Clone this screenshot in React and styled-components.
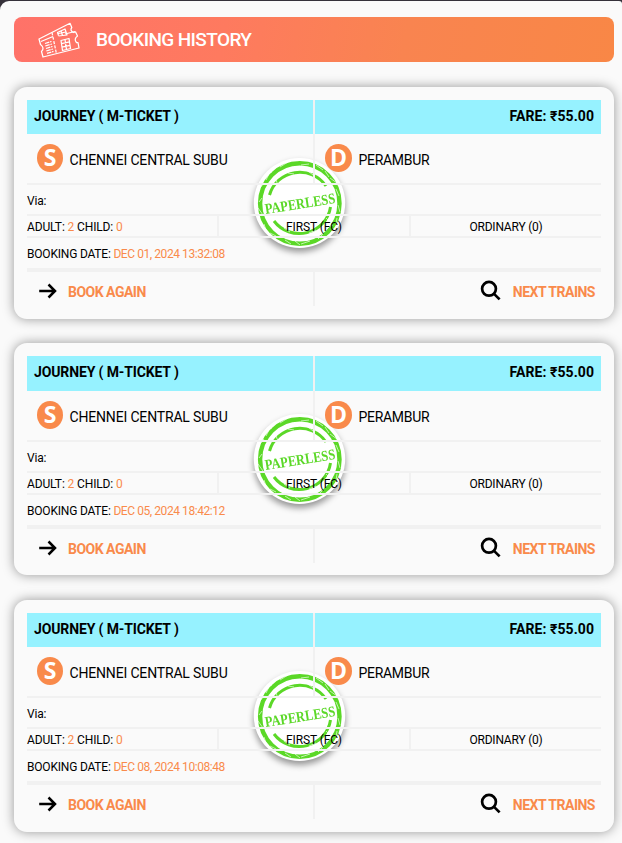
import React from "react";
import styled, { createGlobalStyle } from "styled-components";

const GlobalStyle = createGlobalStyle`
  * { box-sizing: border-box; }
  html { background: #35313a; overflow: hidden; }
  body { margin: 0; background: #35313a; font-family: Roboto, "Liberation Sans", sans-serif; color: #000; }
`;

const Page = styled.main`
  margin-top: 1px;
  height: 842px;
  overflow: hidden;
  padding: 16px 8px 0 14px;
  background: #fafafa;
  border-radius: 9px 3px 0 0;
`;

const Header = styled.header`
  display: flex;
  align-items: center;
  height: 45px;
  padding-left: 24px;
  border-radius: 8px;
  background: linear-gradient(100deg, #ff7269 0%, #fe7a5f 35%, #f98450 65%, #f98746 100%);
`;

const Title = styled.h1`
  margin: 0 0 0 15px;
  color: #fff;
  font-size: 19px;
  font-weight: 500;
  line-height: 45px;
  letter-spacing: -0.62px;
  white-space: nowrap;
`;

const TicketList = styled.section`
  display: flex;
  flex-direction: column;
  gap: 24.65px;
  padding-top: 24.8px;
`;

const Card = styled.article`
  position: relative;
  isolation: isolate;
  flex: none;
  height: 232px;
  padding: 13px;
  border-radius: 13px;
  background: #fafafa;
  box-shadow: 0 0 12px rgba(0, 0, 0, 0.4);
`;

const SplitRow = styled.div`
  display: grid;
  grid-template-columns: 286px 286px;
  column-gap: 2px;
  height: ${(p) => p.$height}px;
  background: linear-gradient(#f1f1f1, #f1f1f1) 286px 0 / 2px 100% no-repeat;
`;

const FareCell = styled.div`
  display: flex;
  justify-content: ${(p) => (p.$end ? "flex-end" : "flex-start")};
  padding: 0 7px;
  background: #96f2ff;
  line-height: 33.4px;
`;

const Station = styled.div`
  display: flex;
  padding: 10px 0 0 10px;
  line-height: 33px;
`;

const Badge = styled.span`
  width: ${(p) => p.$width}px;
  height: 28px;
  margin-right: 6.5px;
  border-radius: 50%;
  background: #f98a4b;
  color: #fff;
  font: bold 23px/26px "Open Sans", sans-serif;
  text-align: center;
`;

const Row = styled.div`
  height: ${(p) => p.$height}px;
  border-top: 2px solid #f1f1f1;
  line-height: ${(p) => p.$line}px;
`;

const TripleRow = styled(Row)`
  display: grid;
  grid-template-columns: 192px 192px 190px;
  text-align: center;
`;

const Cell = styled.div`
  border-right: ${(p) => (p.$divider ? "2px solid #f1f1f1" : "0")};
  text-align: ${(p) => (p.$left ? "left" : "center")};
  white-space: nowrap;
`;

const Small = styled.span`
  color: ${(p) => (p.$accent ? "#f98a4b" : "#000")};
  font-size: 12px;
  letter-spacing: ${(p) => p.$track || 0}px;
  white-space: pre;
`;

const Name = styled.span`
  font-size: 14px;
  letter-spacing: ${(p) => p.$track || 0}px;
  white-space: nowrap;
`;

const Strong = styled(Name)`
  color: ${(p) => (p.$accent ? "#f98a4b" : "#000")};
  font-weight: 700;
`;

const Actions = styled(SplitRow)`
  border-top: 4px solid #f1f1f1;
`;

const Action = styled.div`
  display: flex;
  justify-content: ${(p) => (p.$end ? "flex-end" : "flex-start")};
  padding: ${(p) => (p.$end ? "0 6px 0 0" : "0 0 0 11px")};
  line-height: 41px;
`;

const ArrowIcon = styled.svg`
  width: 20px;
  height: 18px;
  margin: 10px 10px 0 0;
`;

const SearchIcon = styled.svg`
  width: 22px;
  height: 22px;
  margin: 8px 11px 0 0;
`;

const StampSeal = styled.svg`
  position: absolute;
  z-index: -1;
  left: 235px;
  top: 67px;
  width: 101px;
  height: 106px;
  filter: drop-shadow(0 4px 3px rgba(0, 0, 0, 0.4));
`;

function TicketsIcon() {
  return (
    <svg width="43" height="38" viewBox="0 0 43 38" fill="none" stroke="#fff" strokeWidth="1.25" strokeLinejoin="round">
      <path d="M1 18 L32 2.3 L33.8 6.5 Q31.5 9.5 35.5 11.5 L37.5 10.8 L39.5 15 Q35.5 18 38.5 21.5 L40 21.5 L41 27 L5 36 L3.5 30.5 Q7 27 2.5 23.5 Z" />
      <path d="M3 20.5 L15 15.5 M27 13 L37 10.5" />
      <path d="M14 11.5 L18.5 33" strokeDasharray="3 1.4" />
      <path d="M20.5 14.5 L19.5 11.5 L27 8 L29 14 L20.5 15 M23 10 L24.5 14.5 M20.5 12.5 L28 11" />
      <path d="M23 19.5 L31 17.5 L32.5 27.5 L24.5 29.5 Z M27 18.5 L28.5 28.5 M23.5 22.7 L31.5 20.8 M24 26.2 L32 24.3" />
      <path d="M7 22.5 L13.5 20.5 M7.3 25 L14 23 M8 27.5 L14.5 25.5 M8.3 30 L15 28 M9 32.4 L15.5 30.4" strokeDasharray="4.5 0.8" />
    </svg>
  );
}

function Stamp() {
  return (
    <StampSeal viewBox="249 154 101 106">
      <ellipse cx="299.5" cy="203" rx="45.7" ry="45" fill="#fff" />
      <g fill="none" stroke="#5bd827">
        <ellipse cx="299.8" cy="203.5" rx="39.7" ry="40.3" strokeWidth="4.4" />
        <path d="M269.5 195 A31.5 31 0 0 1 326 186" strokeWidth="3" />
        <path d="M330.5 207 A31.5 31 0 0 1 274 221" strokeWidth="3" />
      </g>
      <g fill="none" stroke="#fff" strokeWidth="0.9" opacity="0.7">
        <path d="M260 188 l4 -5 M265 176 l7 -4 M266 180 l3 -6 M280 167 l8 -5 M301 165 l8 -1 M316 165 l7 5 M325 171 l4 6 M330 178 l7 5 M336 189 l3 7 M338 205 l2 7 M337 218 l-1 6 M328 227 l5 -2 M318 239 l5 -5 M301 244 l9 -3 M295 241 l5 4 M285 240 l6 4 M270 233 l6 3 M264 224 l2 6 M258 208 l5 7 M259 202 l3 -4" />
        <path d="M276 180 l2 5 M288 173 l6 1 M308 171 l5 4 M326 218 l3 3 M309 233 l7 -3 M284 228 l6 4" />
      </g>
      <text
        x="300"
        y="208.5"
        transform="rotate(-9 300.5 204)"
        textAnchor="middle"
        textLength="71"
        lengthAdjust="spacingAndGlyphs"
        fill="#5bd827"
        fontFamily="Liberation Serif, serif"
        fontWeight="700"
        fontSize="15"
      >
        PAPERLESS
      </text>
    </StampSeal>
  );
}

function Ticket({ date }) {
  return (
    <Card>
      <Stamp />
      <SplitRow $height={34.2}>
        <FareCell><Strong $track={-0.13}>JOURNEY ( M-TICKET )</Strong></FareCell>
        <FareCell $end><Strong $track={0.08}>FARE: ₹55.00</Strong></FareCell>
      </SplitRow>
      <SplitRow $height={49.2}>
        <Station><Badge $width={26}>S</Badge><Name $track={-0.17}>CHENNEI CENTRAL SUBU</Name></Station>
        <Station><Badge $width={27}>D</Badge><Name $track={-0.3}>PERAMBUR</Name></Station>
      </SplitRow>
      <Row $height={31} $line={29}><Small $track={-0.2}>Via:</Small></Row>
      <TripleRow $height={22} $line={20}>
        <Cell $left $divider>
          <Small $track={-0.12}>ADULT: </Small><Small $accent>2</Small>
          <Small $track={-0.15}> CHILD: </Small><Small $accent>0</Small>
        </Cell>
        <Cell $divider><Small $track={-0.1}>FIRST (FC)</Small></Cell>
        <Cell><Small $track={-0.2}>ORDINARY (0)</Small></Cell>
      </TripleRow>
      <Row $height={32} $line={29.4}>
        <Small $track={-0.2}>BOOKING DATE: </Small><Small $accent $track={-0.43}>{date}</Small>
      </Row>
      <Actions $height={38}>
        <Action>
          <ArrowIcon viewBox="0 0 20 18" fill="none" stroke="#000" strokeWidth="2.5">
            <path d="M1.2 9 H17 M10.5 2.5 L17 9 L10.5 15.5" />
          </ArrowIcon>
          <Strong $accent $track={-0.5}>BOOK AGAIN</Strong>
        </Action>
        <Action $end>
          <SearchIcon viewBox="0 0 22 22" fill="none" stroke="#000" strokeWidth="2.7">
            <circle cx="9" cy="8.8" r="6.9" />
            <path d="M13.8 13.6 L19.6 19.4" />
          </SearchIcon>
          <Strong $accent $track={-0.5}>NEXT TRAINS</Strong>
        </Action>
      </Actions>
    </Card>
  );
}

const bookings = [
  { date: "DEC 01, 2024 13:32:08" },
  { date: "DEC 05, 2024 18:42:12" },
  { date: "DEC 08, 2024 10:08:48" },
];

export default function App() {
  return (
    <>
      <GlobalStyle />
      <Page>
        <Header>
          <TicketsIcon />
          <Title>BOOKING HISTORY</Title>
        </Header>
        <TicketList>
          {bookings.map((b) => (
            <Ticket key={b.date} {...b} />
          ))}
        </TicketList>
      </Page>
    </>
  );
}
